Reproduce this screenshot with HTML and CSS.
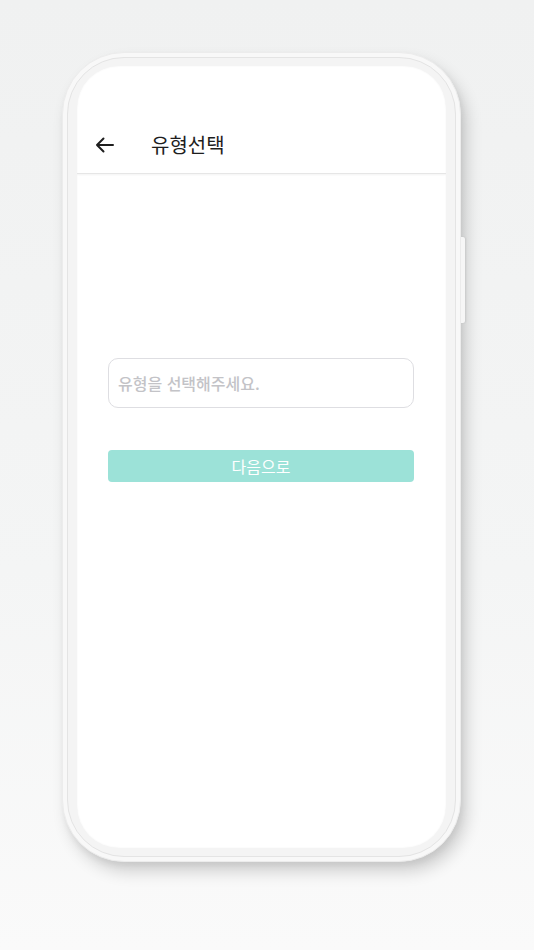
FILE: index.html
```html
<!DOCTYPE html>
<html lang="ko">
<head>
<meta charset="utf-8">
<title>유형선택</title>
<link rel="stylesheet" href="styles.css">
</head>
<body>
<div class="stage">
  <div class="phone">
    <span class="side-btn"></span>
    <div class="bezel">
      <div class="screen">
        <header class="header">
          <button class="back" aria-label="뒤로">
            <svg width="20" height="16" viewBox="0 0 20 16" fill="none" stroke="#1e1e1e" stroke-width="2" stroke-linecap="round" stroke-linejoin="round"><path d="M18 8H2M8.5 1.5L2 8l6.5 6.5"/></svg>
          </button>
          <h1 class="title">유형선택</h1>
        </header>
        <main class="content">
          <div class="select">유형을 선택해주세요.</div>
          <button class="next">다음으로</button>
        </main>
      </div>
    </div>
  </div>
</div>
</body>
</html>
```
FILE: styles.css
```css
html, body {
  margin: 0;
  padding: 0;
}
body {
  width: 534px;
  height: 950px;
  overflow: hidden;
  background: linear-gradient(180deg, #f0f1f1 0%, #f4f5f5 60%, #fafafa 100%);
  font-family: "Noto Sans CJK KR", "Noto Sans", sans-serif;
}
.stage {
  padding: 52px 0 0 62px;
}
.phone {
  position: relative;
  width: 399px;
  height: 810px;
  box-sizing: border-box;
  border-radius: 62px;
  background: #f8f8f8;
  border: 1px solid #ececec;
  padding: 4px;
  box-shadow: 6px 10px 16px rgba(0, 0, 0, 0.16), 2px 4px 6px rgba(0, 0, 0, 0.06);
}
.side-btn {
  position: absolute;
  right: -5px;
  top: 184px;
  width: 4px;
  height: 86px;
  background: #f6f6f6;
  border-radius: 0 2px 2px 0;
  box-shadow: 1px 0 2px rgba(0, 0, 0, 0.08);
}
.bezel {
  height: 100%;
  box-sizing: border-box;
  border-radius: 57px;
  background: #f4f4f4;
  border: 1px solid #e4e4e4;
  padding: 8px 9px 8px 9px;
}
.screen {
  height: 100%;
  border-radius: 42px;
  background: #ffffff;
  overflow: hidden;
  display: flex;
  flex-direction: column;
  box-shadow: inset 0 0 2px rgba(0, 0, 0, 0.06);
}
.header {
  height: 108px;
  box-sizing: border-box;
  padding: 50px 0 0 18px;
  display: flex;
  align-items: center;
  border-bottom: 1px solid #e6e6e6;
  box-shadow: 0 1px 2px rgba(0, 0, 0, 0.05);
}
.back {
  border: 0;
  background: none;
  padding: 0;
  width: 20px;
  height: 16px;
  display: flex;
}
.title {
  margin: 0 0 0 36px;
  font-size: 20px;
  font-weight: 400;
  color: #1e1e1e;
}
.content {
  padding: 184px 32px 0 31px;
  display: flex;
  flex-direction: column;
}
.select {
  height: 50px;
  box-sizing: border-box;
  border: 1px solid #dedee2;
  border-radius: 10px;
  padding: 0 9px;
  display: flex;
  align-items: center;
  font-size: 16px;
  font-weight: 500;
  color: #c3c3c7;
}
.next {
  margin-top: 42px;
  height: 32px;
  border: 0;
  border-radius: 4px;
  background: #9ce2d8;
  color: #ffffff;
  font-family: "Noto Sans CJK KR", "Noto Sans", sans-serif;
  font-size: 16px;
  font-weight: 400;
  padding: 0;
}
```
